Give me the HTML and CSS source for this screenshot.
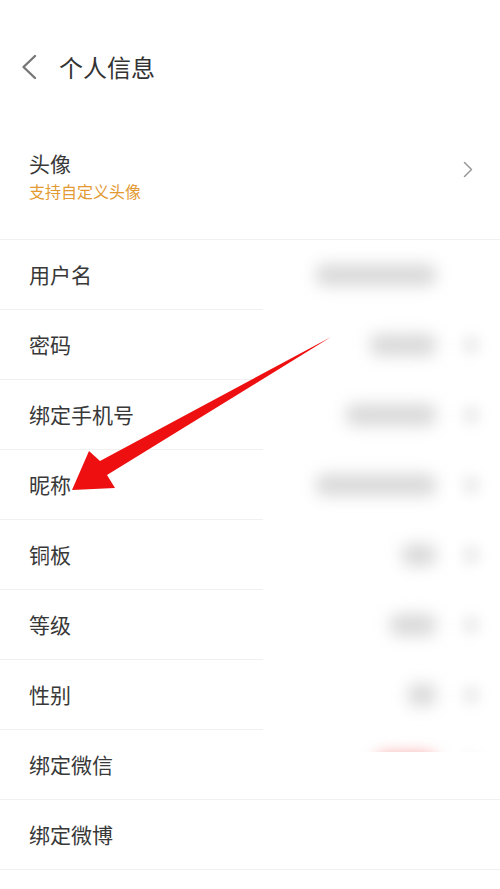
FILE: index.html
```html
<!DOCTYPE html>
<html lang="zh-CN">
<head>
<meta charset="utf-8">
<title>个人信息</title>
<link rel="stylesheet" href="styles.css">
</head>
<body>
<div class="page">
  <header class="topbar">
    <svg class="back" width="16" height="26" viewBox="0 0 16 26"><path d="M14 2 L2.5 13 L14 24" fill="none" stroke="#777" stroke-width="2.4" stroke-linecap="round" stroke-linejoin="round"/></svg>
    <h1 class="title">个人信息</h1>
  </header>

  <div class="avatar-row">
    <div class="avatar-text">
      <div class="label">头像</div>
      <div class="sub">支持自定义头像</div>
    </div>
    <svg class="chev" width="10" height="17" viewBox="0 0 10 17"><path d="M1.5 1.5 L8.5 8.5 L1.5 15.5" fill="none" stroke="#999" stroke-width="1.5" stroke-linecap="round" stroke-linejoin="round"/></svg>
  </div>

  <ul class="list">
    <li class="row">用户名</li>
    <li class="row">密码</li>
    <li class="row">绑定手机号</li>
    <li class="row">昵称</li>
    <li class="row">铜板</li>
    <li class="row">等级</li>
    <li class="row">性别</li>
    <li class="row">绑定微信</li>
    <li class="row">绑定微博</li>
  </ul>

  <div class="redact">
    <div class="slot"><span class="blob" style="width:120px"></span><span class="cblob none"></span></div>
    <div class="slot"><span class="blob" style="width:66px"></span><span class="cblob"></span></div>
    <div class="slot"><span class="blob" style="width:90px"></span><span class="cblob"></span></div>
    <div class="slot"><span class="blob" style="width:120px"></span><span class="cblob"></span></div>
    <div class="slot"><span class="blob" style="width:34px"></span><span class="cblob"></span></div>
    <div class="slot"><span class="blob" style="width:46px"></span><span class="cblob"></span></div>
    <div class="slot"><span class="blob" style="width:28px"></span><span class="cblob"></span></div>
    <div class="slot"><span class="blob red" style="width:60px"></span><span class="cblob"></span></div>
  </div>

  <svg class="arrow" width="500" height="889" viewBox="0 0 500 889">
    <polygon points="72,490 89,451 100,461 331,337 107,475 115,488" fill="#ee1010"/>
  </svg>
</div>
</body>
</html>
```

FILE: styles.css
```css
* { box-sizing: border-box; }
html, body { margin: 0; padding: 0; background: #fff; }
body {
  font-family: "Noto Sans CJK SC", "Noto Sans", sans-serif;
  color: #333;
}
.page {
  position: relative;
  width: 500px;
  height: 889px;
  overflow: hidden;
  background: #fff;
}
.topbar {
  height: 134px;
  display: flex;
  align-items: center;
  padding-left: 21px;
}
.back { display: block; margin-right: 22px; }
.title {
  margin: 0;
  font-size: 24px;
  font-weight: 400;
  color: #333;
  line-height: 30px;
}
.avatar-row {
  height: 106px;
  padding: 15px 27px 0 29px;
  border-bottom: 1px solid #f0f0f0;
  display: flex;
  align-items: flex-start;
  justify-content: space-between;
}
.label {
  font-size: 21px;
  line-height: 28px;
  color: #383838;
}
.sub {
  font-size: 16px;
  line-height: 28px;
  color: #e39a33;
}
.chev { display: block; margin-top: 12px; }
.list { list-style: none; margin: 0; padding: 0; }
.row {
  height: 70px;
  padding-left: 29px;
  padding-bottom: 2px;
  display: flex;
  align-items: center;
  font-size: 21px;
  color: #383838;
  border-bottom: 1px solid #f0f0f0;
}
.redact {
  position: absolute;
  left: 263px;
  top: 240px;
  width: 237px;
  height: 512px;
  background: #fff;
  overflow: hidden;
  display: flex;
  flex-direction: column;
}
.slot {
  flex: 0 0 70px;
  height: 70px;
  display: flex;
  align-items: center;
  justify-content: flex-end;
  padding-right: 20px;
  gap: 26px;
}
.blob {
  display: block;
  height: 22px;
  border-radius: 8px;
  background: #d9d9d9;
  filter: blur(8px);
}
.blob.red { background: #f7a0a0; }
.cblob {
  display: block;
  width: 18px;
  height: 20px;
  border-radius: 6px;
  background: #efefef;
  filter: blur(6px);
}
.cblob.none { background: transparent; }
.arrow {
  position: absolute;
  left: 0;
  top: 0;
  pointer-events: none;
}
```
